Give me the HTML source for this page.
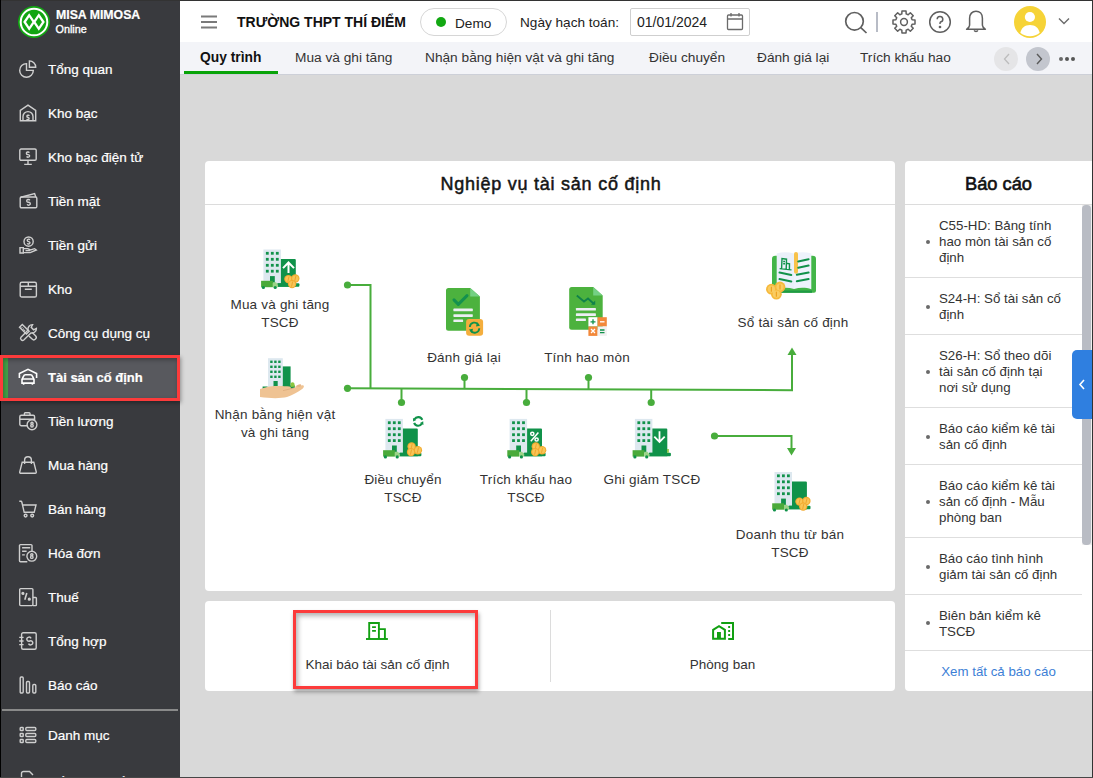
<!DOCTYPE html>
<html><head><meta charset="utf-8">
<style>
*{margin:0;padding:0;box-sizing:border-box}
html,body{width:1093px;height:778px;overflow:hidden}
body{position:relative;background:#d9d9d9;font-family:"Liberation Sans",sans-serif;color:#212121}
#side{-webkit-text-stroke:0.2px currentColor}
.abs{position:absolute}
#frame-t{position:absolute;left:0;top:0;width:1093px;height:1px;background:#333;z-index:50}
#frame-l{position:absolute;left:0;top:0;width:1px;height:778px;background:#000;z-index:50}
#frame-r{position:absolute;left:1092px;top:0;width:1px;height:778px;background:#333;z-index:50}
#frame-b{position:absolute;left:0;top:777px;width:1093px;height:1px;background:#474747;z-index:50}
#side{position:absolute;left:0;top:0;width:180px;height:778px;background:#393a3e}
.mi{position:absolute;left:0;width:180px;height:44px;color:#fff;font-size:13.5px;line-height:45px}
.mi span{position:absolute;left:48px;top:0;white-space:nowrap}
.act{background:#58595e;left:0;width:180px}
.act span{font-weight:bold;font-size:13px}
.act svg{stroke:#fff !important;stroke-width:1.6 !important}
.act::before{content:"";position:absolute;left:3px;top:3px;width:5px;height:40px;background:#43a047}
.mi svg{position:absolute;left:19px;top:13px;width:18px;height:18px;fill:none;stroke:#cfcfcf;stroke-width:1.4;overflow:visible}
#header{position:absolute;left:180px;top:0;width:913px;height:42px;background:#fff}
#tabs{position:absolute;left:180px;top:42px;width:913px;height:33px;background:#f3f4f8;border-bottom:1px solid #cdd0d8}
.tab{position:absolute;top:0;height:32px;line-height:31px;font-size:13.7px;color:#333;white-space:nowrap}
.card{position:absolute;background:#fff;border-radius:4px}
.lbl{position:absolute;z-index:6;font-size:13.5px;letter-spacing:0.2px;padding-top:1px;line-height:18px;color:#333;text-align:center;white-space:nowrap}
.rp-item{position:absolute;left:0;width:177px;border-bottom:1px solid #dedede;font-size:13.3px;line-height:16px;color:#333}
</style></head><body>
<div id="frame-t"></div><div id="frame-l"></div><div id="frame-r"></div><div id="frame-b"></div>

<!-- SIDEBAR -->
<div id="side">
<svg class="abs" style="left:18px;top:6px" width="32" height="32" viewBox="0 0 32 32"><circle cx="16" cy="16" r="16" fill="#12a512"/><circle cx="16" cy="16" r="13.3" fill="none" stroke="#fff" stroke-width="2"/><path d="M6.6 16L11.2 9.2L15.8 16L11.2 22.8Z M25.4 16L20.8 9.2L16.2 16L20.8 22.8Z" fill="#12a512" stroke="#fff" stroke-width="2.3" stroke-linejoin="miter"/></svg>
<div class="abs" style="left:56px;top:8px;font-size:12.3px;font-weight:bold;color:#fff;line-height:14px;white-space:nowrap">MISA MIMOSA</div>
<div class="abs" style="left:55.5px;top:21.5px;font-size:10.8px;color:#fff;line-height:14px;-webkit-text-stroke:0.35px #fff">Online</div>
<div class="mi" style="top:47px"><svg viewBox="0 0 18 18"><path d="M7.5 3.6A6.8 6.8 0 1 0 14.3 10.4H7.5Z"/><path d="M10.4 7.2V0.9A6.3 6.3 0 0 1 16.7 7.2Z"/></svg><span>Tổng quan</span></div>
<div class="mi" style="top:91px"><svg viewBox="0 0 18 18"><path d="M1.3 16.8V6.4L9 1.2L16.7 6.4V16.8Z"/><path d="M4 16.8V12.6A5 5 0 0 1 14 12.6V16.8"/><path d="M10.30 11.90A1.25 1.10 0 1 0 9.00 13.40A1.25 1.10 0 1 1 7.70 14.90M9.00 10.90V11.40M9.00 15.40V15.90"/></svg><span>Kho bạc</span></div>
<div class="mi" style="top:135px"><svg viewBox="0 0 18 18"><rect x="0.8" y="1" width="16.4" height="11.3" rx="1.3"/><path d="M9 12.3V16.4M5.2 16.4H12.8"/><path d="M10.30 4.80A1.50 1.32 0 1 0 9.00 6.60A1.50 1.32 0 1 1 7.70 8.40M9.00 3.60V4.20M9.00 9.00V9.60"/></svg><span>Kho bạc điện tử</span></div>
<div class="mi" style="top:179px"><svg viewBox="0 0 18 18"><rect x="1.2" y="5" width="16.6" height="10.8" rx="1.2"/><path d="M1.8 5.2L15.6 1.6L16.8 5"/><path d="M10.80 8.35A1.62 1.43 0 1 0 9.50 10.30A1.62 1.43 0 1 1 8.20 12.25M9.50 7.05V7.70M9.50 12.90V13.55"/></svg><span>Tiền mặt</span></div>
<div class="mi" style="top:223px"><svg viewBox="0 0 18 18"><circle cx="9.6" cy="5.6" r="4.6"/><path d="M10.90 3.95A1.38 1.21 0 1 0 9.60 5.60A1.38 1.21 0 1 1 8.30 7.25M9.60 2.85V3.40M9.60 7.80V8.35"/><path d="M1 11.6H4.3V17H1Z"/><path d="M4.3 12.6H8.8L11.5 13.9L15.6 12.7L17.3 14L11.2 16.6H4.3"/><path d="M6.5 14.6H11"/></svg><span>Tiền gửi</span></div>
<div class="mi" style="top:267px"><svg viewBox="0 0 18 18"><rect x="1.2" y="2.3" width="16.2" height="14.7" rx="1.6"/><path d="M1.2 6.3H17.4M9.3 2.3V6.3M5.8 9.3H12.8"/></svg><span>Kho</span></div>
<div class="mi" style="top:311px"><svg viewBox="0 0 18 18"><path d="M3.3 0.4L0.5 3.2L7.4 10.1L10.2 7.3Z"/><path d="M2.6 3.4L6.2 7" stroke-dasharray="1 0.9"/><path d="M9.9 11.9L13.1 15.1A2.4 2.4 0 0 0 16.5 11.7L13.3 8.5"/><path d="M2 13.2L9.1 6.1A4.5 4.5 0 0 1 13.6 0.6L12.2 3.3L14.6 5.8L17.4 4.4A4.5 4.5 0 0 1 11.9 8.9L4.8 16A2 2 0 0 1 2 13.2Z"/></svg><span>Công cụ dụng cụ</span></div>
<div class="mi act" style="top:355px"><svg viewBox="0 0 18 18"><path d="M0.4 9.9V5.6L9 1.3L17.6 5.6V9.9"/><path d="M3 15.1V11.4L4.6 8.1A2 2 0 0 1 6.4 6.8H11.6A2 2 0 0 1 13.4 8.1L15 11.4V15.1Z"/><path d="M3 11H15M4.6 15.1V16.8M13.4 15.1V16.8"/></svg><span>Tài sản cố định</span></div>
<div class="mi" style="top:399px"><svg viewBox="0 0 18 18"><rect x="0.8" y="3.2" width="14.8" height="10.6" rx="1.5"/><path d="M0.8 7.2H15.6M5.4 3.2V1.6A0.8 0.8 0 0 1 6.2 0.8H10.2A0.8 0.8 0 0 1 11 1.6V3.2"/><circle cx="13" cy="12.8" r="4.9" fill="#393a3e"/><path d="M13 10.3A1.1 1.1 0 1 0 13 12.5A1.2 1.2 0 1 1 13 15A1.2 1.2 0 1 1 13 12.5A1.1 1.1 0 1 0 13 10.3Z"/></svg><span>Tiền lương</span></div>
<div class="mi" style="top:443px"><svg viewBox="0 0 18 18"><path d="M3.2 6.2H14.8L17.3 16.2A1 1 0 0 1 16.3 17.2H1.7A1 1 0 0 1 0.7 16.2Z"/><path d="M5.6 8V4.2A3.4 3.4 0 0 1 12.4 4.2V8"/></svg><span>Mua hàng</span></div>
<div class="mi" style="top:487px"><svg viewBox="0 0 18 18"><path d="M0.3 1.3H1.8A1 1 0 0 1 2.8 2L5.2 12.3H15.2L17 5H4"/><circle cx="6.6" cy="15.6" r="1.4"/><circle cx="13.2" cy="15.6" r="1.4"/></svg><span>Bán hàng</span></div>
<div class="mi" style="top:531px"><svg viewBox="0 0 18 18"><path d="M13 7V1.6A1 1 0 0 0 12 0.6H1.5A1 1 0 0 0 0.5 1.6V16.8A1 1 0 0 0 1.5 17.8H8.3"/><path d="M3.1 3.8H11.2M3.1 7.3H7.6M3.1 10.9H5.8"/><circle cx="12.8" cy="12.2" r="4.9" fill="#393a3e"/><path d="M12.8 9.7A1.1 1.1 0 1 0 12.8 11.9A1.2 1.2 0 1 1 12.8 14.4A1.2 1.2 0 1 1 12.8 11.9A1.1 1.1 0 1 0 12.8 9.7Z"/></svg><span>Hóa đơn</span></div>
<div class="mi" style="top:575px"><svg viewBox="0 0 18 18"><path d="M0.7 1.6A1 1 0 0 1 1.7 0.6H12.9A1 1 0 0 1 13.9 1.6V16.6A1 1 0 0 1 12.9 17.6H1.7A1 1 0 0 1 0.7 16.6Z"/><path d="M13.9 9.5H16.6A0.8 0.8 0 0 1 17.4 10.3V16.8A0.8 0.8 0 0 1 16.6 17.6H13.9"/><path d="M5.8 11.8L7.8 5" stroke-width="1.6"/><circle cx="3.9" cy="5.4" r="0.9" fill="#cfcfcf"/><circle cx="10.3" cy="11.2" r="0.9" fill="#cfcfcf"/></svg><span>Thuế</span></div>
<div class="mi" style="top:619px"><svg viewBox="0 0 18 18"><rect x="2.6" y="0.7" width="14.6" height="16.6" rx="1.5"/><path d="M0.2 5.4H4.6M0.2 9H4.6M0.2 12.6H4.6"/><path d="M12.10 6.30A2.25 1.98 0 1 0 10.80 9.00A2.25 1.98 0 1 1 9.50 11.70M10.80 4.50V5.40M10.80 12.60V13.50"/></svg><span>Tổng hợp</span></div>
<div class="mi" style="top:663px"><svg viewBox="0 0 18 18"><rect x="1.2" y="1" width="3" height="16" rx="1"/><rect x="7.5" y="5.5" width="3" height="11.5" rx="1"/><rect x="13.8" y="8.5" width="3" height="8.5" rx="1"/></svg><span>Báo cáo</span></div>
<div class="abs" style="left:2px;top:709px;width:176px;height:2px;background:#8a8a8a"></div>
<div class="mi" style="top:713px"><svg viewBox="0 0 18 18"><rect x="1.2" y="1.5" width="3" height="3" rx="0.6"/><rect x="1.2" y="7.5" width="3" height="3" rx="0.6"/><rect x="1.2" y="13.5" width="3" height="3" rx="0.6"/><rect x="6.8" y="1.5" width="10" height="3" rx="1"/><rect x="6.8" y="7.5" width="10" height="3" rx="1"/><rect x="6.8" y="13.5" width="10" height="3" rx="1"/></svg><span>Danh mục</span></div>
<div class="mi" style="top:757px"><svg viewBox="0 0 18 18"><path d="M2.5 18V3.5A2 2 0 0 1 4.5 1.5H10.5L14 5"/></svg><span style="top:2px">Số dư ban đầu</span></div>
</div>

<div class="abs" style="left:0;top:355px;width:180px;height:46px;border:3px solid #fc3b3b;z-index:60;box-shadow:1px 2px 4px rgba(0,0,0,.35), inset 1px 2px 4px rgba(0,0,0,.3)"></div>
<!-- HEADER -->
<div id="header">
<svg class="abs" style="left:20px;top:15px" width="18" height="15" viewBox="0 0 18 15"><path d="M1 1.5H17M1 7H17M1 12.5H17" stroke="#7a7a7a" stroke-width="1.8"/></svg>
<div class="abs" style="left:57px;top:14px;font-size:14px;font-weight:bold;color:#111;line-height:17px;white-space:nowrap">TRƯỜNG THPT THÍ ĐIỂM</div>
<div class="abs" style="left:240px;top:8px;width:87px;height:28px;border:1px solid #d6d6d6;border-radius:14px"></div>
<div class="abs" style="left:256px;top:17px;width:10px;height:10px;border-radius:50%;background:#12a812"></div>
<div class="abs" style="left:275px;top:14.5px;font-size:13.6px;color:#222;line-height:17px">Demo</div>
<div class="abs" style="left:340px;top:14px;font-size:13.6px;color:#222;line-height:17px;white-space:nowrap">Ngày hạch toán:</div>
<div class="abs" style="left:450px;top:8px;width:120px;height:28px;border:1px solid #cfcfcf;border-radius:2px"></div>
<div class="abs" style="left:457px;top:14px;font-size:14px;color:#222;line-height:17px">01/01/2024</div>
<svg class="abs" style="left:546px;top:12px" width="18" height="19" viewBox="0 0 18 19" fill="none" stroke="#6b6b6b" stroke-width="1.3"><rect x="1.5" y="3" width="15" height="14.5" rx="1"/><path d="M1.5 7H16.5M5 1V4.5M13 1V4.5"/></svg>
<svg class="abs" style="left:664px;top:11px" width="24" height="23" viewBox="0 0 24 23" fill="none" stroke="#5f5f5f" stroke-width="1.7"><circle cx="10.5" cy="10.3" r="8.8"/><path d="M16.8 16.6L22.5 22"/></svg>
<div class="abs" style="left:696px;top:12px;width:2px;height:20px;background:#b8bcc6"></div>
<svg class="abs" style="left:711px;top:9px" width="26" height="26" viewBox="0 0 26 26" fill="none" stroke="#5f5f5f" stroke-width="1.5" stroke-linejoin="round"><path d="M10.83 4.89 L10.96 1.99 L15.04 1.99 L15.17 4.89 L17.20 5.73 L19.34 3.77 L22.23 6.66 L20.27 8.80 L21.11 10.83 L24.01 10.96 L24.01 15.04 L21.11 15.17 L20.27 17.20 L22.23 19.34 L19.34 22.23 L17.20 20.27 L15.17 21.11 L15.04 24.01 L10.96 24.01 L10.83 21.11 L8.80 20.27 L6.66 22.23 L3.77 19.34 L5.73 17.20 L4.89 15.17 L1.99 15.04 L1.99 10.96 L4.89 10.83 L5.73 8.80 L3.77 6.66 L6.66 3.77 L8.80 5.73Z"/><circle cx="13" cy="13" r="3.4"/></svg>
<svg class="abs" style="left:748px;top:10px" width="24" height="24" viewBox="0 0 24 24" fill="none" stroke="#5f5f5f" stroke-width="1.5"><circle cx="12" cy="12" r="10.3"/><path d="M9.2 9.3A2.8 2.8 0 1 1 12.5 12C12 12.3 12 12.8 12 14" /><circle cx="12" cy="17" r="0.6" fill="#5f5f5f"/></svg>
<svg class="abs" style="left:785px;top:10px" width="22" height="24" viewBox="0 0 22 24" fill="none" stroke="#5f5f5f" stroke-width="1.5"><path d="M11 1.2C7.2 1.2 4.6 4 4.6 8.2V15.2C4.6 16.8 3.6 17.8 1.6 19.3H20.4C18.4 17.8 17.4 16.8 17.4 15.2V8.2C17.4 4 14.8 1.2 11 1.2Z" stroke-linejoin="round"/><path d="M9.2 20.4A1.9 1.5 0 0 0 12.8 20.4"/></svg>
<svg class="abs" style="left:834px;top:6px" width="32" height="32" viewBox="0 0 32 32"><circle cx="16" cy="16" r="16" fill="#f6d337"/><circle cx="15.9" cy="11" r="5.1" fill="#fff"/><path d="M6.3 26.8C7.5 21.8 11 19.1 16 19.1C21 19.1 24.5 21.8 25.7 26.8C23.3 29 19.8 30.2 16 30.2C12.2 30.2 8.7 29 6.3 26.8Z" fill="#fff"/></svg>
<svg class="abs" style="left:878px;top:17px" width="12" height="8" viewBox="0 0 12 8" fill="none" stroke="#6b6b6b" stroke-width="1.4"><path d="M1 1.5L6 6.5L11 1.5"/></svg>
</div>
<div id="tabs">
<div class="tab" style="left:20px;font-weight:bold;color:#111;font-size:13.8px">Quy trình</div>
<div class="abs" style="left:4px;top:29px;width:94px;height:3px;background:#08a308"></div>
<div class="tab" style="left:115px">Mua và ghi tăng</div>
<div class="tab" style="left:245px">Nhận bằng hiện vật và ghi tăng</div>
<div class="tab" style="left:469px">Điều chuyển</div>
<div class="tab" style="left:577px">Đánh giá lại</div>
<div class="tab" style="left:680px">Trích khấu hao</div>
<div class="abs" style="left:814px;top:5px;width:24px;height:24px;border-radius:50%;background:#e5e5e7"></div>
<svg class="abs" style="left:823px;top:11px" width="8" height="12" viewBox="0 0 8 12" fill="none" stroke="#bdbdbd" stroke-width="1.3"><path d="M6 1L1.5 6L6 11"/></svg>
<div class="abs" style="left:846px;top:5px;width:24px;height:24px;border-radius:50%;background:#c3c6ce"></div>
<svg class="abs" style="left:855px;top:11px" width="8" height="12" viewBox="0 0 8 12" fill="none" stroke="#5a5a5a" stroke-width="1.4"><path d="M2 1L6.5 6L2 11"/></svg>
<div class="abs" style="left:879px;top:15px;width:4px;height:4px;border-radius:50%;background:#6a6a6a;box-shadow:6px 0 0 #555,12px 0 0 #555"></div>
</div>

<!-- MAIN CARD -->
<div class="card" style="left:205px;top:161px;width:690px;height:430px">
  <div class="abs" style="left:0;top:0;width:690px;height:44px;border-bottom:1px solid #dcdcdc"></div>
  <div class="abs" style="left:1px;top:13px;width:690px;text-align:center;font-size:18px;letter-spacing:0.75px;color:#151515;-webkit-text-stroke:0.5px #151515">Nghiệp vụ tài sản cố định</div>
</div>

<!--DIAG-START-->
<svg class="abs" style="left:0;top:0;z-index:5" width="1093" height="778" viewBox="0 0 1093 778">
<g fill="none" stroke="#48ad3c" stroke-width="2">
<path d="M347.5 285H370.5V389"/>
<path d="M347.5 388.3L792 390.2V352"/>
<path d="M464.5 389V377.5M588.5 389.5V377.5M401.5 388.5V402.5M526.5 389V402.5M651.2 389.5V402.5"/>
<path d="M714.5 436H791.5V450"/>
</g>
<g fill="#48ad3c">
<circle cx="347.5" cy="285" r="3.6"/><circle cx="347.5" cy="388.3" r="3.6"/>
<circle cx="464.5" cy="377.5" r="3.6"/><circle cx="588.5" cy="377.5" r="3.6"/>
<circle cx="401.5" cy="402.5" r="3.6"/><circle cx="526.5" cy="402.5" r="3.6"/><circle cx="651.2" cy="402.5" r="3.6"/>
<circle cx="714.5" cy="436" r="3.6"/>
<path d="M787.5 355L792 347.5L796.5 355Z"/>
<path d="M787 448L791.5 455.5L796 448Z"/>
</g>
<g>
<rect x="268" y="358.2" width="14.8" height="29.6" fill="#dde8ef"/>
<g fill="#10924a">
<rect x="270.2" y="360.6" width="2.4" height="2.4"/><rect x="274.2" y="360.6" width="2.4" height="2.4"/><rect x="278.2" y="360.6" width="2.4" height="2.4"/>
<rect x="270.2" y="365.6" width="2.4" height="2.4"/><rect x="274.2" y="365.6" width="2.4" height="2.4"/><rect x="278.2" y="365.6" width="2.4" height="2.4"/>
<rect x="270.2" y="370.6" width="2.4" height="2.4"/><rect x="274.2" y="370.6" width="2.4" height="2.4"/><rect x="278.2" y="370.6" width="2.4" height="2.4"/>
<rect x="270.2" y="375.6" width="2.4" height="2.4"/><rect x="274.2" y="375.6" width="2.4" height="2.4"/><rect x="278.2" y="375.6" width="2.4" height="2.4"/>
<rect x="273.5" y="381" width="4.2" height="6.8"/>
<path d="M282.8 366.4H290.6V388H282.8Z"/>
<rect x="262.6" y="386.5" width="5" height="3"/><rect x="282.8" y="385.5" width="12" height="4.5"/>
</g>
<path d="M290.6 383.5C291.5 382 293 381.8 294.2 383L295 386.5L290.6 387Z" fill="#8cc63f"/>
<path d="M294 387.8C297 386.5 300 385.3 302.3 385.2C304.5 385.2 304.3 387.3 302.5 388.7C298 392 292 395.5 287 397C281 398.6 270 398.5 260 397V389L268 386.8C272 385.6 285 386 289.5 386.6C291.4 387 291.4 389.2 289.5 389.5L284.5 390.3Z" fill="#efc393"/><path d="M295 386.8C297 385.2 299 384 300.5 384.3C301.8 384.8 301 386.2 299.5 387" fill="#e6b585"/>
<path d="M283 390.6L294 388" fill="none" stroke="#d9a877" stroke-width="0.7"/>
</g>
<g>
<path d="M446 290.5A2.5 2.5 0 0 1 448.5 288H470.2L479.9 296.5V328.3A2.5 2.5 0 0 1 477.4 330.8H448.5A2.5 2.5 0 0 1 446 328.3Z" fill="#4cb23e"/>
<path d="M470.2 288V296.5H479.9Z" fill="#74d083"/>
<path d="M454 299.9L458.3 304.4L467 295.6" fill="none" stroke="#14914e" stroke-width="3" stroke-linecap="round" stroke-linejoin="round"/>
<g fill="#eceef3"><rect x="453.4" y="308.6" width="19.4" height="2.7" rx="0.6"/><rect x="453.4" y="314.2" width="19.4" height="2.7" rx="0.6"/><rect x="453.4" y="319.4" width="9.7" height="2.7" rx="0.6"/></g>
<rect x="466.1" y="318.9" width="17" height="16.8" rx="3" fill="#f4ae3d"/>
<g fill="none" stroke="#10924a" stroke-width="1.8"><path d="M469.8 327A4.7 4.7 0 0 1 478.6 325"/><path d="M479.3 328.3A4.7 4.7 0 0 1 470.5 330.3"/></g>
<path d="M477 322.3L480 325.8L476 326.5Z M472 333L469 329.5L473 328.8Z" fill="#10924a"/>
</g>
<g>
<path d="M569.2 289.5A2.5 2.5 0 0 1 571.7 287H593.2L602.7 295.4V327.3A2.5 2.5 0 0 1 600.2 329.8H571.7A2.5 2.5 0 0 1 569.2 327.3Z" fill="#4cb23e"/>
<path d="M593.2 287V295.4H602.7Z" fill="#74d083"/>
<path d="M576.8 295.5L584 301.5L588 298.5L594 304" fill="none" stroke="#10824a" stroke-width="1.8"/>
<path d="M591 304.8H595.2V300.6Z" fill="#10824a"/>
<g fill="#eceef3"><rect x="575.9" y="307.9" width="20" height="2.7" rx="0.6"/><rect x="575.9" y="313.3" width="20" height="2.7" rx="0.6"/><rect x="575.9" y="318.4" width="10" height="2.7" rx="0.6"/></g>
<rect x="588.4" y="317.2" width="9.2" height="9.3" fill="#fff"/>
<rect x="597.6" y="317.2" width="9.2" height="9.3" fill="#f2883a"/>
<rect x="588.4" y="326.5" width="9.2" height="9.4" fill="#f2883a"/>
<rect x="597.6" y="326.5" width="9.2" height="9.4" fill="#f1f1f1"/>
<g stroke-width="1.3" fill="none"><path d="M593 319.3V324.3M590.5 321.8H595.5" stroke="#10924a"/><path d="M600 321.8H604.5" stroke="#fff"/><path d="M591 329L595 333M595 329L591 333" stroke="#fff"/><path d="M600 330H604.5M600 332.6H604.5" stroke="#10924a"/></g>
</g>
<g>
<path d="M772 259A3.3 3.3 0 0 1 775.3 255.7H812.7A3.3 3.3 0 0 1 816 259V290.8A2 2 0 0 1 814 292.8H774A2 2 0 0 1 772 290.8Z" fill="#42b548"/>
<path d="M776 290.5H812V292.8H776Z" fill="#1f9a45"/>
<path d="M776.7 253.6C782 251.8 788 251.8 794 253.5V289C788 287.3 782 287.5 776.7 289.2Z" fill="#eaf0fa"/>
<path d="M811.3 253.6C806 251.8 800 251.8 794 253.5V289C800 287.3 806 287.5 811.3 289.2Z" fill="#eef3fc"/>
<rect x="794" y="252.1" width="4" height="21.6" rx="2" fill="#f8c24a"/>
<g fill="none" stroke="#10924a" stroke-width="2" stroke-linecap="round">
<path d="M779.5 272.6L791.3 275.1M779.5 279.1L791.3 281.6"/>
<path d="M798.2 261.5L808.6 259.3M798.2 267.8L808.6 265.6M796.8 274.8L808.6 272.6M796.8 281.3L808.6 279.1"/>
</g>
<g fill="none" stroke="#10924a" stroke-width="1.4"><path d="M781.6 268.5L782 258.5L786.5 259.2L786.2 269M786.3 263.2L789.5 263.8L789.4 269.3M779.6 268.6L791.5 269.9"/><path d="M783.2 261.5H785M783.2 263.8H785"/></g>
<g fill="#f6b93b"><circle cx="780" cy="287" r="5.4"/><circle cx="771.4" cy="289.2" r="5.4"/><circle cx="776.4" cy="294.2" r="5.4"/></g>
<g fill="#fcd573" opacity="0.7"><circle cx="780" cy="287" r="3.6"/><circle cx="771.4" cy="289.2" r="3.6"/><circle cx="776.4" cy="294.2" r="3.6"/></g>
<g fill="#eea321"><rect x="779.4" y="284.5" width="1.2" height="5"/><rect x="770.8" y="286.7" width="1.2" height="5"/><rect x="775.8" y="291.7" width="1.2" height="5"/></g>
</g>
<g transform="translate(263.4 249.5)">
<rect x="0" y="0" width="17.5" height="33.8" fill="#dde8ef"/>
<g fill="#10924a"><rect x="2.5" y="2.4" width="2.8" height="2.8"/><rect x="7.5" y="2.4" width="2.8" height="2.8"/><rect x="12.5" y="2.4" width="2.8" height="2.8"/><rect x="2.5" y="8.4" width="2.8" height="2.8"/><rect x="7.5" y="8.4" width="2.8" height="2.8"/><rect x="12.5" y="8.4" width="2.8" height="2.8"/><rect x="2.5" y="14.4" width="2.8" height="2.8"/><rect x="7.5" y="14.4" width="2.8" height="2.8"/><rect x="12.5" y="14.4" width="2.8" height="2.8"/><rect x="2.5" y="20.3" width="2.8" height="2.8"/><rect x="7.5" y="20.3" width="2.8" height="2.8"/><rect x="12.5" y="20.3" width="2.8" height="2.8"/>
<rect x="6.6" y="26.6" width="4.8" height="7"/>
<path d="M17.5 9.6H31.4A1 1 0 0 1 32.4 10.6V37.3H14V33.8H17.5Z"/>
<rect x="14" y="33.8" width="22" height="3.5" rx="1"/>
</g>
<rect x="-2.3" y="31.3" width="11.8" height="6.4" fill="#4aaa3a"/>
<path d="M9.5 32.8H12.6L14.6 35.5V37.7H9.5Z" fill="#9bd487"/>
<circle cx="0" cy="38" r="1.6" fill="#10924a"/><circle cx="11.8" cy="38" r="1.6" fill="#10924a"/>
<circle cx="25.0" cy="29.6" r="4.2" fill="#f3ab30"/><circle cx="25.0" cy="29.6" r="3.1" fill="#f9c556"/><path d="M25.6 27.0L24.4 32.2" stroke="#ee9f25" stroke-width="1" opacity="0.8"/><circle cx="31.9" cy="29.0" r="4.2" fill="#f3ab30"/><circle cx="31.9" cy="29.0" r="3.1" fill="#f9c556"/><path d="M32.5 26.4L31.3 31.6" stroke="#ee9f25" stroke-width="1" opacity="0.8"/><circle cx="28.7" cy="34.6" r="4.2" fill="#f3ab30"/><circle cx="28.7" cy="34.6" r="3.1" fill="#f9c556"/><path d="M29.3 32.0L28.1 37.2" stroke="#ee9f25" stroke-width="1" opacity="0.8"/>
<path d="M25.1 23.4V13M19.6 18.6L25.1 13L30.6 18.6" fill="none" stroke="#fff" stroke-width="2"/>
</g><g transform="translate(385.4 418.9)">
<rect x="0" y="0" width="17.5" height="33.8" fill="#dde8ef"/>
<g fill="#10924a"><rect x="2.5" y="2.4" width="2.8" height="2.8"/><rect x="7.5" y="2.4" width="2.8" height="2.8"/><rect x="12.5" y="2.4" width="2.8" height="2.8"/><rect x="2.5" y="8.4" width="2.8" height="2.8"/><rect x="7.5" y="8.4" width="2.8" height="2.8"/><rect x="12.5" y="8.4" width="2.8" height="2.8"/><rect x="2.5" y="14.4" width="2.8" height="2.8"/><rect x="7.5" y="14.4" width="2.8" height="2.8"/><rect x="12.5" y="14.4" width="2.8" height="2.8"/><rect x="2.5" y="20.3" width="2.8" height="2.8"/><rect x="7.5" y="20.3" width="2.8" height="2.8"/><rect x="12.5" y="20.3" width="2.8" height="2.8"/>
<rect x="6.6" y="26.6" width="4.8" height="7"/>
<path d="M17.5 9.6H31.4A1 1 0 0 1 32.4 10.6V37.3H14V33.8H17.5Z"/>
<rect x="14" y="33.8" width="22" height="3.5" rx="1"/>
</g>
<rect x="-2.3" y="31.3" width="11.8" height="6.4" fill="#4aaa3a"/>
<path d="M9.5 32.8H12.6L14.6 35.5V37.7H9.5Z" fill="#9bd487"/>
<circle cx="0" cy="38" r="1.6" fill="#10924a"/><circle cx="11.8" cy="38" r="1.6" fill="#10924a"/>
<circle cx="32.5" cy="31.3" r="4.2" fill="#f3ab30"/><circle cx="32.5" cy="31.3" r="3.1" fill="#f9c556"/><path d="M33.1 28.7L31.9 33.9" stroke="#ee9f25" stroke-width="1" opacity="0.8"/><circle cx="26.2" cy="27.6" r="4.2" fill="#f3ab30"/><circle cx="26.2" cy="27.6" r="3.1" fill="#f9c556"/><path d="M26.8 25.0L25.6 30.2" stroke="#ee9f25" stroke-width="1" opacity="0.8"/><circle cx="25.6" cy="33.2" r="4.2" fill="#f3ab30"/><circle cx="25.6" cy="33.2" r="3.1" fill="#f9c556"/><path d="M26.2 30.6L25.0 35.8" stroke="#ee9f25" stroke-width="1" opacity="0.8"/>
<g fill="none" stroke="#10924a" stroke-width="2.1"><path d="M36.84 1.03A4.3 4.3 0 0 0 29.08 0.35"/><path d="M28.76 3.97A4.3 4.3 0 0 0 36.52 4.65"/></g><path d="M27.78 2.60L27.54 -1.00L31.01 1.00Z M37.82 2.40L38.06 6.00L34.59 4.00Z" fill="#10924a"/>
</g><g transform="translate(509.6 418.9)">
<rect x="0" y="0" width="17.5" height="33.8" fill="#dde8ef"/>
<g fill="#10924a"><rect x="2.5" y="2.4" width="2.8" height="2.8"/><rect x="7.5" y="2.4" width="2.8" height="2.8"/><rect x="12.5" y="2.4" width="2.8" height="2.8"/><rect x="2.5" y="8.4" width="2.8" height="2.8"/><rect x="7.5" y="8.4" width="2.8" height="2.8"/><rect x="12.5" y="8.4" width="2.8" height="2.8"/><rect x="2.5" y="14.4" width="2.8" height="2.8"/><rect x="7.5" y="14.4" width="2.8" height="2.8"/><rect x="12.5" y="14.4" width="2.8" height="2.8"/><rect x="2.5" y="20.3" width="2.8" height="2.8"/><rect x="7.5" y="20.3" width="2.8" height="2.8"/><rect x="12.5" y="20.3" width="2.8" height="2.8"/>
<rect x="6.6" y="26.6" width="4.8" height="7"/>
<path d="M17.5 9.6H31.4A1 1 0 0 1 32.4 10.6V37.3H14V33.8H17.5Z"/>
<rect x="14" y="33.8" width="22" height="3.5" rx="1"/>
</g>
<rect x="-2.3" y="31.3" width="11.8" height="6.4" fill="#4aaa3a"/>
<path d="M9.5 32.8H12.6L14.6 35.5V37.7H9.5Z" fill="#9bd487"/>
<circle cx="0" cy="38" r="1.6" fill="#10924a"/><circle cx="11.8" cy="38" r="1.6" fill="#10924a"/>
<circle cx="32.5" cy="31.3" r="4.2" fill="#f3ab30"/><circle cx="32.5" cy="31.3" r="3.1" fill="#f9c556"/><path d="M33.1 28.7L31.9 33.9" stroke="#ee9f25" stroke-width="1" opacity="0.8"/><circle cx="26.2" cy="27.6" r="4.2" fill="#f3ab30"/><circle cx="26.2" cy="27.6" r="3.1" fill="#f9c556"/><path d="M26.8 25.0L25.6 30.2" stroke="#ee9f25" stroke-width="1" opacity="0.8"/><circle cx="25.6" cy="33.2" r="4.2" fill="#f3ab30"/><circle cx="25.6" cy="33.2" r="3.1" fill="#f9c556"/><path d="M26.2 30.6L25.0 35.8" stroke="#ee9f25" stroke-width="1" opacity="0.8"/>
<g fill="none" stroke="#fff" stroke-width="1.5"><path d="M28.8 13.6L21.2 22.4"/><circle cx="22.7" cy="14.9" r="1.6"/><circle cx="27" cy="20.6" r="1.6"/></g>
</g><g transform="translate(634.9 418.9)">
<rect x="0" y="0" width="17.5" height="33.8" fill="#dde8ef"/>
<g fill="#10924a"><rect x="2.5" y="2.4" width="2.8" height="2.8"/><rect x="7.5" y="2.4" width="2.8" height="2.8"/><rect x="12.5" y="2.4" width="2.8" height="2.8"/><rect x="2.5" y="8.4" width="2.8" height="2.8"/><rect x="7.5" y="8.4" width="2.8" height="2.8"/><rect x="12.5" y="8.4" width="2.8" height="2.8"/><rect x="2.5" y="14.4" width="2.8" height="2.8"/><rect x="7.5" y="14.4" width="2.8" height="2.8"/><rect x="12.5" y="14.4" width="2.8" height="2.8"/><rect x="2.5" y="20.3" width="2.8" height="2.8"/><rect x="7.5" y="20.3" width="2.8" height="2.8"/><rect x="12.5" y="20.3" width="2.8" height="2.8"/>
<rect x="6.6" y="26.6" width="4.8" height="7"/>
<path d="M17.5 9.6H31.4A1 1 0 0 1 32.4 10.6V37.3H14V33.8H17.5Z"/>
<rect x="14" y="33.8" width="22" height="3.5" rx="1"/>
</g><path d="M32.2 30.2H33.9V33.8H32.2Z" fill="#8cc63f"/>
<rect x="-2.3" y="31.3" width="11.8" height="6.4" fill="#4aaa3a"/>
<path d="M9.5 32.8H12.6L14.6 35.5V37.7H9.5Z" fill="#9bd487"/>
<circle cx="0" cy="38" r="1.6" fill="#10924a"/><circle cx="11.8" cy="38" r="1.6" fill="#10924a"/>

<path d="M24.6 12.4V23M19.4 17.8L24.6 23L29.8 17.8" fill="none" stroke="#fff" stroke-width="1.8"/>
</g><g transform="translate(774.5 472)">
<rect x="0" y="0" width="17.5" height="33.8" fill="#dde8ef"/>
<g fill="#10924a"><rect x="2.5" y="2.4" width="2.8" height="2.8"/><rect x="7.5" y="2.4" width="2.8" height="2.8"/><rect x="12.5" y="2.4" width="2.8" height="2.8"/><rect x="2.5" y="8.4" width="2.8" height="2.8"/><rect x="7.5" y="8.4" width="2.8" height="2.8"/><rect x="12.5" y="8.4" width="2.8" height="2.8"/><rect x="2.5" y="14.4" width="2.8" height="2.8"/><rect x="7.5" y="14.4" width="2.8" height="2.8"/><rect x="12.5" y="14.4" width="2.8" height="2.8"/><rect x="2.5" y="20.3" width="2.8" height="2.8"/><rect x="7.5" y="20.3" width="2.8" height="2.8"/><rect x="12.5" y="20.3" width="2.8" height="2.8"/>
<rect x="6.6" y="26.6" width="4.8" height="7"/>
<path d="M17.5 9.6H31.4A1 1 0 0 1 32.4 10.6V37.3H14V33.8H17.5Z"/>
<rect x="14" y="33.8" width="22" height="3.5" rx="1"/>
</g>
<rect x="-2.3" y="31.3" width="11.8" height="6.4" fill="#4aaa3a"/>
<path d="M9.5 32.8H12.6L14.6 35.5V37.7H9.5Z" fill="#9bd487"/>
<circle cx="0" cy="38" r="1.6" fill="#10924a"/><circle cx="11.8" cy="38" r="1.6" fill="#10924a"/>
<circle cx="25.0" cy="29.6" r="4.2" fill="#f3ab30"/><circle cx="25.0" cy="29.6" r="3.1" fill="#f9c556"/><path d="M25.6 27.0L24.4 32.2" stroke="#ee9f25" stroke-width="1" opacity="0.8"/><circle cx="31.9" cy="29.0" r="4.2" fill="#f3ab30"/><circle cx="31.9" cy="29.0" r="3.1" fill="#f9c556"/><path d="M32.5 26.4L31.3 31.6" stroke="#ee9f25" stroke-width="1" opacity="0.8"/><circle cx="28.7" cy="34.6" r="4.2" fill="#f3ab30"/><circle cx="28.7" cy="34.6" r="3.1" fill="#f9c556"/><path d="M29.3 32.0L28.1 37.2" stroke="#ee9f25" stroke-width="1" opacity="0.8"/>

</g>
</svg>
<!--DIAG-END-->
<div class="lbl" style="left:180px;width:200px;top:295px">Mua và ghi tăng<br>TSCĐ</div>
<div class="lbl" style="left:175px;width:200px;top:405px">Nhận bằng hiện vật<br>và ghi tăng</div>
<div class="lbl" style="left:364px;width:200px;top:348px">Đánh giá lại</div>
<div class="lbl" style="left:487px;width:200px;top:348px">Tính hao mòn</div>
<div class="lbl" style="left:693px;width:200px;top:313px">Sổ tài sản cố định</div>
<div class="lbl" style="left:303px;width:200px;top:470px">Điều chuyển<br>TSCĐ</div>
<div class="lbl" style="left:426px;width:200px;top:470px">Trích khấu hao<br>TSCĐ</div>
<div class="lbl" style="left:552px;width:200px;top:470px">Ghi giảm TSCĐ</div>
<div class="lbl" style="left:690px;width:200px;top:525px">Doanh thu từ bán<br>TSCĐ</div>
<!-- BOTTOM CARD -->
<div class="card" style="left:205px;top:601px;width:690px;height:90px">
<svg class="abs" style="left:150px;top:11px" width="45" height="35" viewBox="0 0 45 35" fill="none" stroke="#12a012" stroke-width="1.9"><path d="M11 27H32.9"/><path d="M14.2 27V11H23.9V27"/><path d="M23.9 17.1H29.9V27"/><path d="M17.1 15.1H20.9M17.1 18.9H20.9"/></svg>
<div class="abs" style="left:0;top:54.5px;width:345px;text-align:center;font-size:13.5px;color:#333;line-height:18px">Khai báo tài sản cố định</div>
<div class="abs" style="left:345px;top:9px;width:1px;height:72px;background:#dcdcdc"></div>
<svg class="abs" style="left:495px;top:11px" width="45" height="35" viewBox="0 0 45 35" fill="none" stroke="#12a012" stroke-width="2"><path d="M13.1 26.8V17.8L19 14.1L24.9 17.8V26.8Z" stroke-linejoin="miter"/><path d="M21.2 11H33V27H28.2"/><g fill="#12a012" stroke="none"><rect x="17" y="20" width="3.9" height="7"/><rect x="28.2" y="14" width="1.9" height="2"/><rect x="28.2" y="18" width="1.9" height="2"/><rect x="28.2" y="22" width="1.9" height="2"/></g></svg>
<div class="abs" style="left:345px;top:54.5px;width:345px;text-align:center;font-size:13.5px;color:#333;line-height:18px">Phòng ban</div>
</div>
<div class="abs" style="left:293px;top:610px;width:185px;height:79px;border:3px solid #fc3b3b;z-index:40;box-shadow:1px 3px 4px rgba(0,0,0,.35), inset 2px 3px 5px rgba(0,0,0,.3)"></div>

<!-- RIGHT PANEL -->
<div class="card" style="left:905px;top:161px;width:200px;height:530px;overflow:hidden">
<div class="abs" style="left:0;top:0;width:200px;height:44px;border-bottom:1px solid #dcdcdc"></div>
<div class="abs" style="left:0;top:12.5px;width:187px;text-align:center;font-size:18.3px;color:#111;line-height:20px;-webkit-text-stroke:0.6px #111">Báo cáo</div>
<div class="abs" style="left:0;top:44px;width:177px;height:73px;border-bottom:1px solid #dedede"><div class="abs" style="left:20.5px;top:34.5px;width:4px;height:4px;border-radius:50%;background:#6a6a6a"></div><div class="abs" style="left:34px;top:12.5px;font-size:13.3px;line-height:16px;color:#333;white-space:nowrap">C55-HD: Bảng tính<br>hao mòn tài sản cố<br>định</div></div>
<div class="abs" style="left:0;top:117px;width:177px;height:57px;border-bottom:1px solid #dedede"><div class="abs" style="left:20.5px;top:26.5px;width:4px;height:4px;border-radius:50%;background:#6a6a6a"></div><div class="abs" style="left:34px;top:12.5px;font-size:13.3px;line-height:16px;color:#333;white-space:nowrap">S24-H: Sổ tài sản cố<br>định</div></div>
<div class="abs" style="left:0;top:174px;width:177px;height:73px;border-bottom:1px solid #dedede"><div class="abs" style="left:20.5px;top:34.5px;width:4px;height:4px;border-radius:50%;background:#6a6a6a"></div><div class="abs" style="left:34px;top:12.5px;font-size:13.3px;line-height:16px;color:#333;white-space:nowrap">S26-H: Sổ theo dõi<br>tài sản cố định tại<br>nơi sử dụng</div></div>
<div class="abs" style="left:0;top:247px;width:177px;height:57px;border-bottom:1px solid #dedede"><div class="abs" style="left:20.5px;top:26.5px;width:4px;height:4px;border-radius:50%;background:#6a6a6a"></div><div class="abs" style="left:34px;top:12.5px;font-size:13.3px;line-height:16px;color:#333;white-space:nowrap">Báo cáo kiểm kê tài<br>sản cố định</div></div>
<div class="abs" style="left:0;top:304px;width:177px;height:73px;border-bottom:1px solid #dedede"><div class="abs" style="left:20.5px;top:34.5px;width:4px;height:4px;border-radius:50%;background:#6a6a6a"></div><div class="abs" style="left:34px;top:12.5px;font-size:13.3px;line-height:16px;color:#333;white-space:nowrap">Báo cáo kiểm kê tài<br>sản cố định - Mẫu<br>phòng ban</div></div>
<div class="abs" style="left:0;top:377px;width:177px;height:57px;border-bottom:1px solid #dedede"><div class="abs" style="left:20.5px;top:26.5px;width:4px;height:4px;border-radius:50%;background:#6a6a6a"></div><div class="abs" style="left:34px;top:12.5px;font-size:13.3px;line-height:16px;color:#333;white-space:nowrap">Báo cáo tình hình<br>giảm tài sản cố định</div></div>
<div class="abs" style="left:0;top:434px;width:177px;height:56px;border-bottom:1px solid #dedede"><div class="abs" style="left:20.5px;top:26.0px;width:4px;height:4px;border-radius:50%;background:#6a6a6a"></div><div class="abs" style="left:34px;top:13px;font-size:13.3px;line-height:16px;color:#333;white-space:nowrap">Biên bản kiểm kê<br>TSCĐ</div></div>
<div class="abs" style="left:0;top:489px;width:200px;height:1px;background:#dedede"></div>
<div class="abs" style="left:0;top:502px;width:187px;text-align:center;font-size:13.3px;color:#3d7fd6;line-height:18px">Xem tất cả báo cáo</div>
<div class="abs" style="left:177px;top:44px;width:10px;height:340px;background:#f0f0f0"></div>
<div class="abs" style="left:177px;top:44px;width:9px;height:340px;border-radius:4px;background:#b9bcc4"></div>
</div>
<div class="abs" style="left:1072px;top:350px;width:24px;height:69px;border-radius:5px 0 0 5px;background:#2f7fe0;z-index:45"></div>
<svg class="abs" style="left:1078px;top:379px;z-index:46" width="8" height="11" viewBox="0 0 8 11" fill="none" stroke="#fff" stroke-width="1.6"><path d="M6 1L2 5.5L6 10"/></svg>

</body></html>
